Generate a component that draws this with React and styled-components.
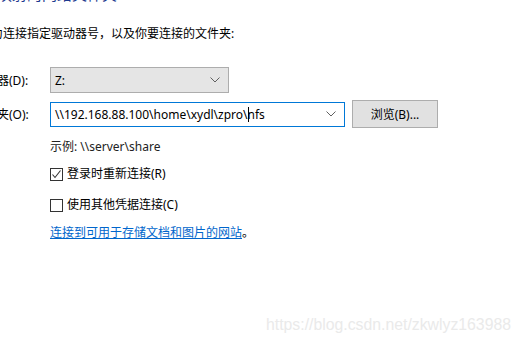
import React from 'react';
import styled, { createGlobalStyle } from 'styled-components';

const Global = createGlobalStyle`
  body {
    margin: 0;
    background: #fff;
  }
`;

const Page = styled.div`
  position: relative;
  width: 522px;
  height: 345px;
  overflow: hidden;
  font-family: "Segoe UI", "Noto Sans", "Noto Sans CJK SC", sans-serif;
  font-size: 12px;
  color: #000;
  display: flex;
  flex-direction: column;
`;

const Heading = styled.div`
  margin: -16px 0 0 -3px;
  font-size: 15px;
  line-height: 20px;
  color: #1e3a8f;
  white-space: nowrap;
`;

const Intro = styled.div`
  margin: 22px 0 0 -21px;
  line-height: 16px;
  white-space: nowrap;
`;

const Form = styled.div`
  margin-top: 25px;
  display: grid;
  grid-template-columns: 50px auto;
  row-gap: 7px;
  align-items: center;
`;

const Label = styled.div`
  margin-left: -27px;
  white-space: nowrap;
`;

const Field = styled.div`
  display: flex;
  align-items: center;
  gap: 7px;
`;

const Box = styled.div`
  box-sizing: border-box;
  width: ${p => p.$w}px;
  height: ${p => p.$h}px;
  border: 1px solid ${p => (p.$focus ? '#0078d7' : '#adadad')};
  background: ${p => (p.$focus ? '#fff' : '#e5e5e5')};
  display: flex;
  align-items: center;
  justify-content: space-between;
  padding: 0 8px 0 4px;
  white-space: nowrap;
`;

const Caret = styled.span`
  display: inline-block;
  width: 1px;
  height: 15px;
  background: #000;
  vertical-align: -3px;
  margin: 0 -1px 0 0;
`;

const Button = styled.div`
  box-sizing: border-box;
  width: 86px;
  height: 28px;
  border: 1px solid #adadad;
  background: #e1e1e1;
  display: flex;
  align-items: center;
  justify-content: center;
`;

const Body = styled.div`
  margin: 11px 0 0 50px;
  display: flex;
  flex-direction: column;
  align-items: flex-start;
`;

const Example = styled.div`
  line-height: 16px;
  color: #222;
`;

const Check = styled.div`
  display: flex;
  align-items: center;
  gap: 4px;
  margin-top: ${p => p.$top}px;
  line-height: 16px;
`;

const Tick = styled.span`
  box-sizing: border-box;
  width: 13px;
  height: 13px;
  border: 1px solid #333;
  background: #fff;
  display: flex;
  align-items: center;
  justify-content: center;
`;

const LinkLine = styled.div`
  margin-top: 12px;
  line-height: 16px;
`;

const Link = styled.a`
  color: #0066cc;
  text-decoration: underline;
`;

const Watermark = styled.div`
  position: absolute;
  left: 266px;
  top: 316px;
  font-family: "Liberation Sans", Arial, sans-serif;
  font-size: 15.8px;
  color: #eaeaea;
  white-space: nowrap;
`;

const Chevron = () => (
  <svg width="10" height="6" viewBox="0 0 10 6">
    <polyline points="0.5,0.5 5,5 9.5,0.5" fill="none" stroke="#606060" strokeWidth="1" />
  </svg>
);

const CheckBox = ({ checked, top, children }) => (
  <Check $top={top}>
    <Tick>
      {checked && (
        <svg width="11" height="11" viewBox="0 0 11 11">
          <polyline points="1.5,5.5 4,8.5 9.5,1.5" fill="none" stroke="#333" strokeWidth="1.1" />
        </svg>
      )}
    </Tick>
    <span>{children}</span>
  </Check>
);

export default () => (
  <Page>
    <Global />
    <Heading>映射的网络文件夹:</Heading>
    <Intro>请为连接指定驱动器号，以及你要连接的文件夹:</Intro>
    <Form>
      <Label>驱动器(D):</Label>
      <Field>
        <Box $w={179} $h={26}>
          <span>Z:</span>
          <Chevron />
        </Box>
      </Field>
      <Label>文件夹(O):</Label>
      <Field>
        <Box $w={295} $h={25} $focus>
          <span>
            \\192.168.88.100\home\xydl\zpro\<Caret />nfs
          </span>
          <Chevron />
        </Box>
        <Button>浏览(B)...</Button>
      </Field>
    </Form>
    <Body>
      <Example>示例: \\server\share</Example>
      <CheckBox checked top={11}>登录时重新连接(R)</CheckBox>
      <CheckBox top={15}>使用其他凭据连接(C)</CheckBox>
      <LinkLine>
        <Link href="#">连接到可用于存储文档和图片的网站</Link>。
      </LinkLine>
    </Body>
    <Watermark>https://blog.csdn.net/zkwlyz163988</Watermark>
  </Page>
);
